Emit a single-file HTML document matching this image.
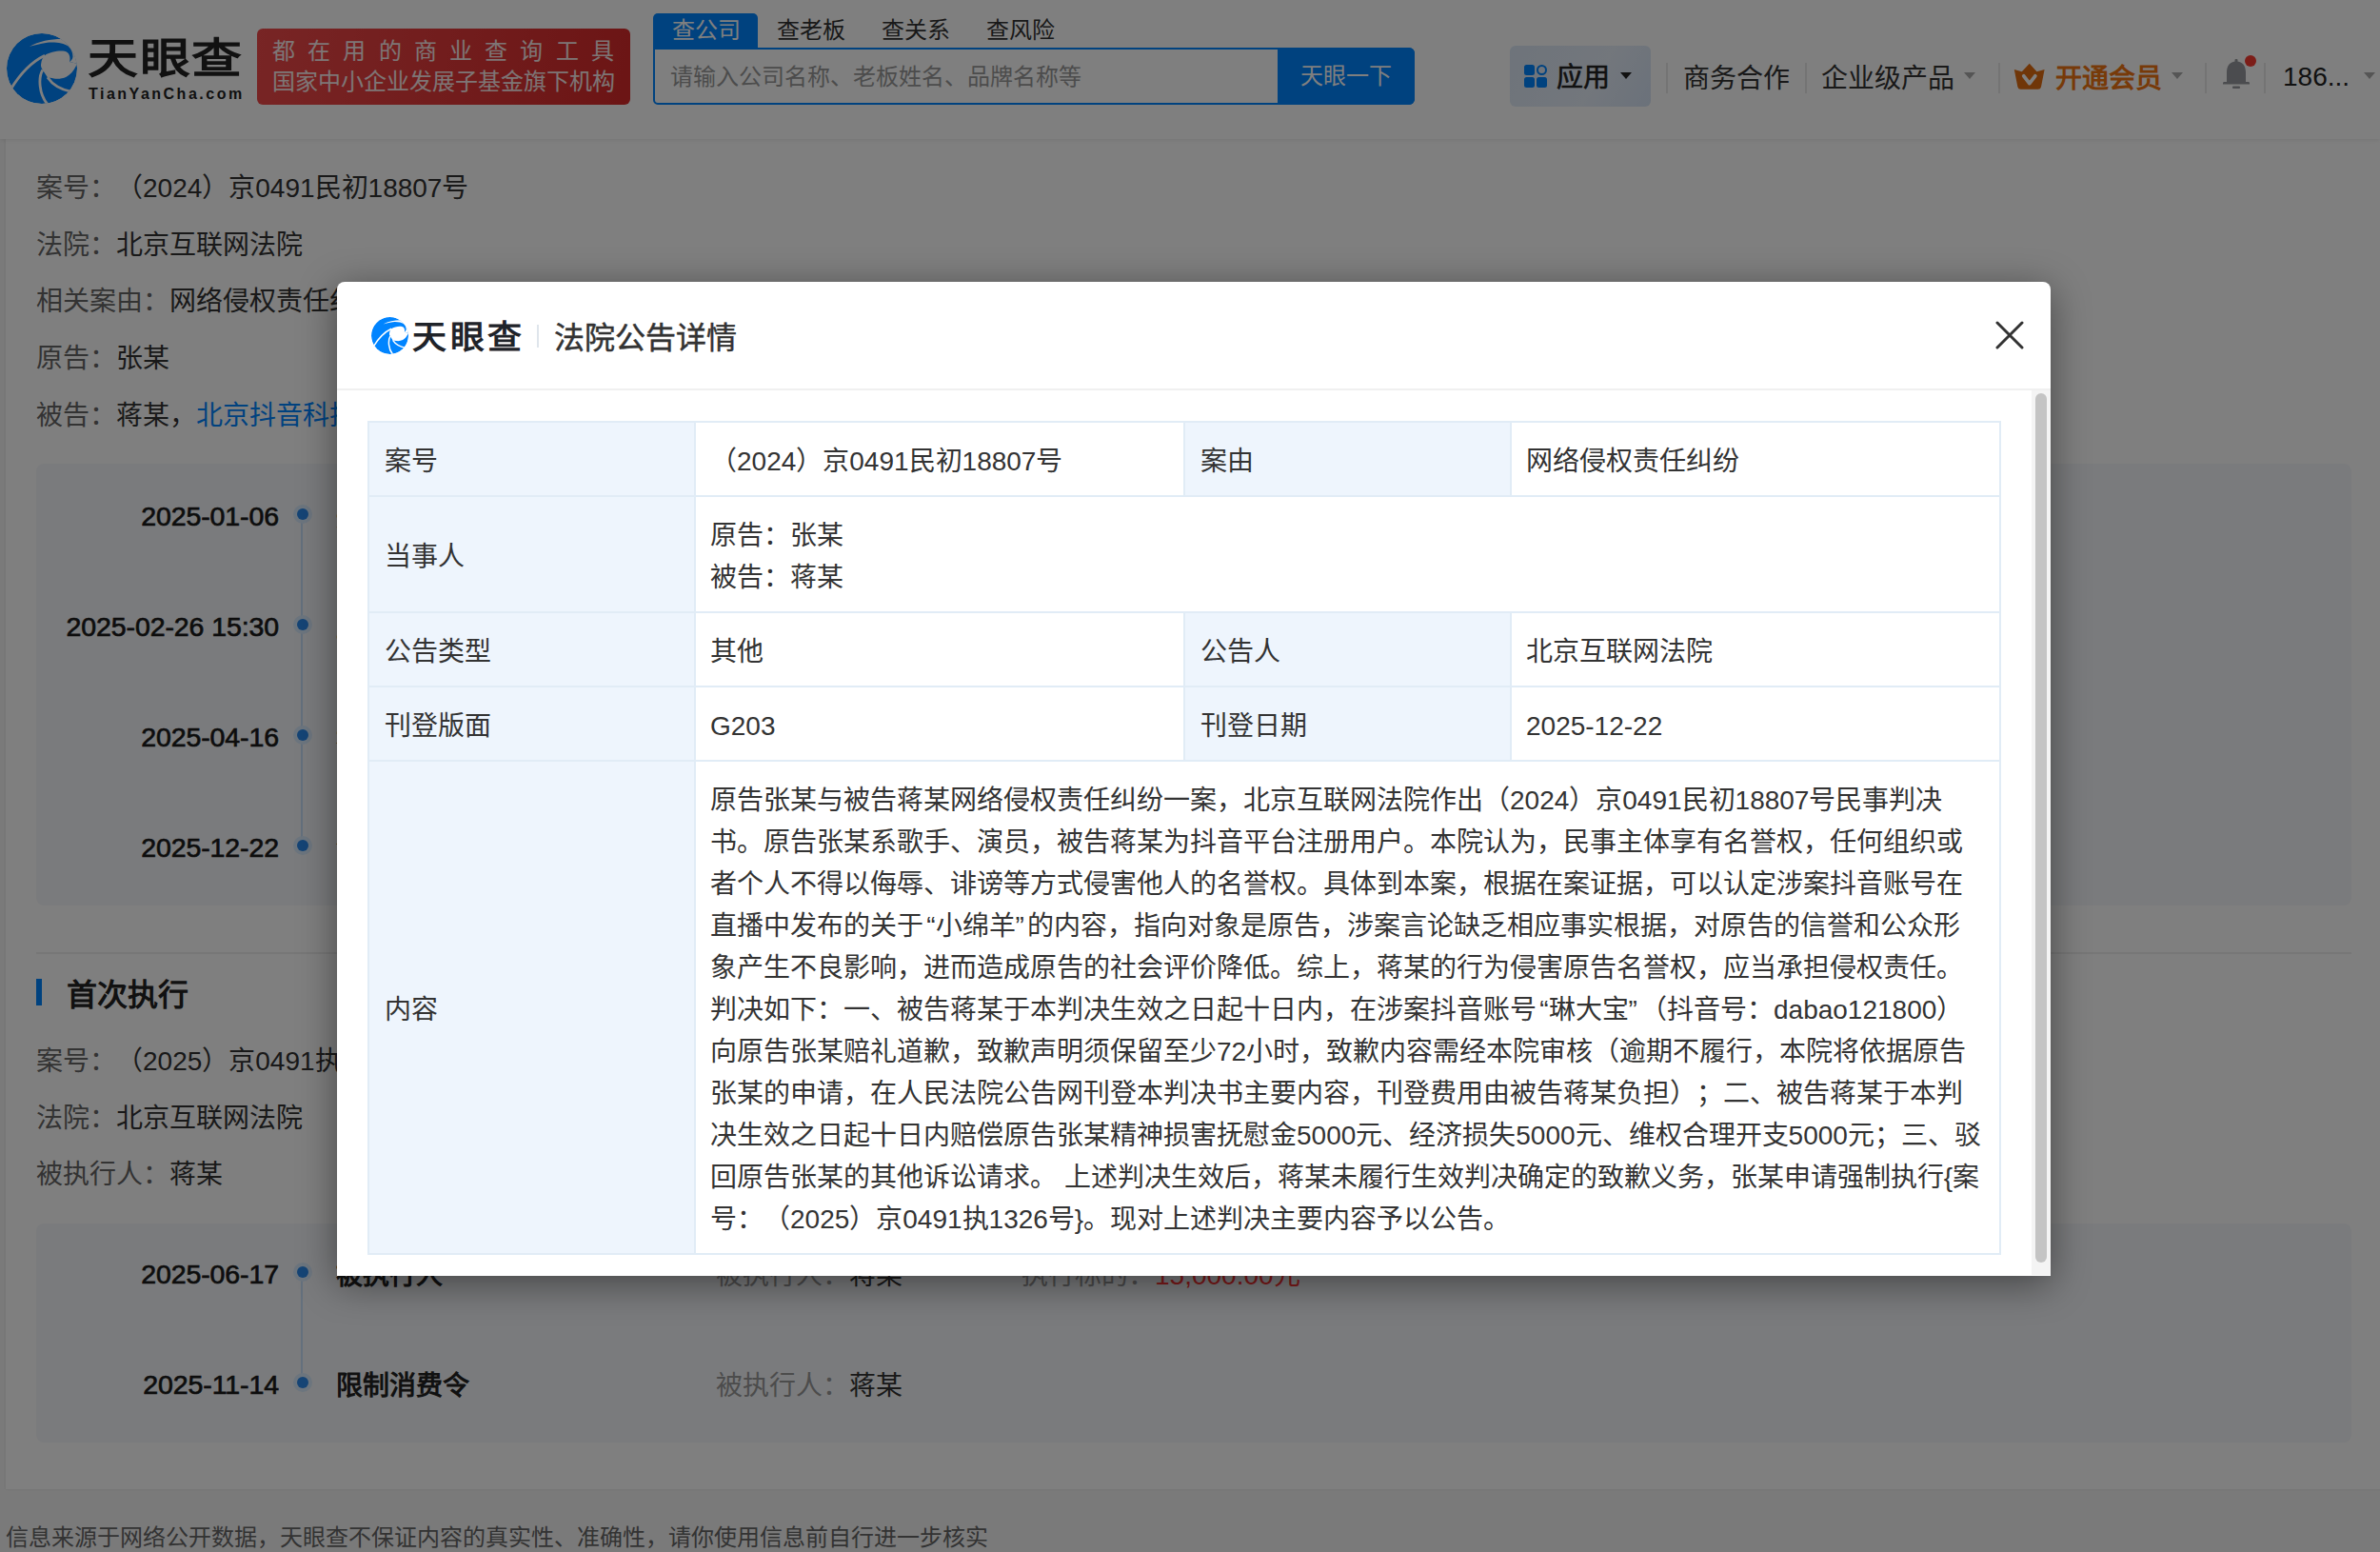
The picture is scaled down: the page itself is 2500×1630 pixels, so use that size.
<!DOCTYPE html>
<html lang="zh-CN">
<head>
<meta charset="utf-8">
<style>
*{box-sizing:border-box;margin:0;padding:0}
html,body{width:2500px;height:1630px;overflow:hidden}
body{position:relative;text-spacing-trim:space-all;background:#f5f5f5;font-family:"Liberation Sans",sans-serif;color:#333}
.a{position:absolute;white-space:nowrap}
/* header */
#hdr{position:absolute;z-index:2;left:0;top:0;width:2500px;height:146px;background:#fff;box-shadow:0 1px 5px rgba(0,0,0,.09)}
#card{position:absolute;left:6px;top:146px;width:2496px;height:1418px;background:#fff;box-shadow:0 0 3px rgba(0,0,0,.1)}
.lbl{color:#666}
.t28{font-size:28px;line-height:40px}
.tl-box{position:absolute;left:38px;width:2432px;background:#f5f7fa;border-radius:8px}
.date{position:absolute;right:2207px;font-size:28.5px;line-height:40px;font-weight:normal;-webkit-text-stroke:0.7px #1a1a1a;letter-spacing:-0.1px;color:#1a1a1a;text-align:right}
.dot{position:absolute;left:307.5px;width:20px;height:20px;margin-top:-0.5px;border-radius:50%;background:#d8eafc}
.dot:after{content:"";position:absolute;left:4px;top:4px;width:12px;height:12px;border-radius:50%;background:#2a88ea}
.vline{position:absolute;left:316px;width:2px;background:#c8e0fa}
#ov{position:absolute;z-index:5;left:0;top:0;width:2500px;height:1630px;background:rgba(0,0,0,.5)}
#modal{position:absolute;z-index:6;left:354px;top:296px;width:1800px;height:1044px;background:#fff;border-radius:8px 8px 0 0;box-shadow:0 8px 40px rgba(0,0,0,.45);overflow:hidden}
#tbl{position:absolute;left:32px;top:146px;width:1716px;border-collapse:collapse;table-layout:fixed;font-size:28px;line-height:44px;color:#333}
#tbl td{border:2px solid #e1ecf6;padding:19px 16px 13px;vertical-align:middle}
.ql,.qr{display:inline-block;width:12.5px}.ql{text-align:right}
#tbl td.k{background:#eef5fd;width:343px;padding-left:16px}
#tbl td.v{width:514px;padding-left:15px}
</style>
</head>
<body>
<div id="hdr">
  <svg class="a" style="left:7px;top:35px" width="74" height="74" viewBox="0 0 100 100">
    <defs><clipPath id="cc1"><circle cx="50" cy="50" r="50"/></clipPath></defs>
    <g clip-path="url(#cc1)">
      <circle cx="50" cy="50" r="50" fill="#0084ff"/>
      <path fill="#fff" d="M54.2,31.3 C62,26 80,23 86,27 C90,30 90.5,36 89.3,40.5 L104,44 L104,46 L99.2,45 C95,54 90,59 84.7,61.8 C79,64.5 72,65 67.2,64.1 C63,63.5 60,63 58,62.6 L51.1,51.9 C48.5,48 48.4,46 48.9,43 C49.5,38 51,34 54.2,31.3 Z"/>
      <path fill="#fff" d="M77.9,8.2 C62,8.3 46,11 32,19 C45,15 58,12.6 64,12.8 C74,13 82,14.5 87,18 C92,22 94,28 93.9,33.6 C93.5,37 91.5,39 89.3,40.5 L104,44 L104,-2 L80,-2 Z"/>
      <path fill="none" stroke="#fff" stroke-width="3.8" d="M54.2,31.3 C36,40 20,56 6,79"/>
      <path fill="none" stroke="#fff" stroke-width="3.8" d="M51.1,51.9 C45,62 45,86 59,102"/>
      <path fill="none" stroke="#fff" stroke-width="3.8" d="M58,62.6 C63,70 72,79 92,83"/>
    </g>
  </svg>
  <div class="a" style="left:92px;top:35px;font-size:53px;line-height:64px;font-weight:900;color:#222;letter-spacing:1.5px;transform:scaleY(.83);transform-origin:0 0">天眼查</div>
  <div class="a" style="left:93px;top:88px;font-size:16px;line-height:22px;font-weight:bold;color:#222;letter-spacing:2.5px">TianYanCha.com</div>
  <div class="a" style="left:270px;top:30px;width:392px;height:80px;border-radius:6px;background:linear-gradient(100deg,#f04a4a,#d82a2a)"></div>
  <div class="a" style="left:286px;top:37px;font-size:24px;line-height:34px;color:#fff;letter-spacing:13.2px;opacity:.9">都在用的商业查询工具</div>
  <div class="a" style="left:286px;top:69px;font-size:24px;line-height:34px;color:#fff;opacity:.9">国家中小企业发展子基金旗下机构</div>
  <!-- tabs -->
  <div class="a" style="left:686px;top:14px;width:110px;height:40px;background:#0084ff;border-radius:5px 5px 0 0"></div>
  <div class="a" style="left:706px;top:16px;font-size:24px;line-height:32px;color:#fff">查公司</div>
  <div class="a" style="left:816px;top:16px;font-size:24px;line-height:32px;color:#333">查老板</div>
  <div class="a" style="left:926px;top:16px;font-size:24px;line-height:32px;color:#333">查关系</div>
  <div class="a" style="left:1036px;top:16px;font-size:24px;line-height:32px;color:#333">查风险</div>
  <div class="a" style="left:686px;top:50px;width:800px;height:60px;border:2px solid #0084ff;border-radius:0 6px 6px 5px;background:#fff"></div>
  <div class="a" style="left:704px;top:64px;font-size:24px;line-height:34px;color:#999">请输入公司名称、老板姓名、品牌名称等</div>
  <div class="a" style="left:1342px;top:50px;width:144px;height:60px;background:#0084ff;border-radius:0 6px 6px 0"></div>
  <div class="a" style="left:1366px;top:63px;font-size:24px;line-height:34px;color:#fff">天眼一下</div>
  <!-- right nav -->
  <div class="a" style="left:1586px;top:48px;width:148px;height:64px;border-radius:6px;background:linear-gradient(120deg,#dde8f6,#e6eef9 60%,#d6e3f5)"></div>
  <div class="a" style="left:1601px;top:68px;width:11px;height:11px;border-radius:2.5px;background:#0084ff"></div>
  <div class="a" style="left:1601px;top:81px;width:11px;height:11px;border-radius:2.5px;background:#0084ff"></div>
  <div class="a" style="left:1614px;top:81px;width:11px;height:11px;border-radius:2.5px;background:#0084ff"></div>
  <div class="a" style="left:1614px;top:68px;width:11px;height:11px;border-radius:50%;border:2.2px solid #0084ff"></div>
  <div class="a" style="left:1635px;top:62px;font-size:28px;line-height:40px;color:#222;-webkit-text-stroke:0.6px #222">应用</div>
  <div class="a" style="left:1702px;top:76px;width:0;height:0;border-left:6px solid transparent;border-right:6px solid transparent;border-top:7px solid #222"></div>
  <div class="a" style="left:1750px;top:66px;width:2px;height:32px;background:#e8e8e8"></div>
  <div class="a" style="left:1768px;top:63px;font-size:28px;line-height:40px;color:#333">商务合作</div>
  <div class="a" style="left:1896px;top:66px;width:2px;height:32px;background:#e8e8e8"></div>
  <div class="a" style="left:1913px;top:63px;font-size:28px;line-height:40px;color:#333">企业级产品</div>
  <div class="a" style="left:2063px;top:76px;width:0;height:0;border-left:6.5px solid transparent;border-right:6.5px solid transparent;border-top:7px solid #aaa"></div>
  <div class="a" style="left:2099px;top:66px;width:2px;height:32px;background:#e8e8e8"></div>
  <svg class="a" style="left:2115px;top:66px" width="33" height="28" viewBox="0 0 33 28">
    <path fill="#e06c10" d="M16.8,0.8 L24.5,9.2 L32.6,7 L29,25.2 Q28.4,27.8 25.8,27.8 L7.6,27.8 Q5,27.8 4.4,25.2 L0.8,7 L8.8,9.2 Z"/>
    <path fill="none" stroke="#fff" stroke-width="3.8" stroke-linecap="round" stroke-linejoin="round" d="M10.8,13.8 L16.8,21.6 L22.8,13.8"/>
  </svg>
  <div class="a" style="left:2159px;top:63px;font-size:28px;line-height:40px;color:#ee7412;font-weight:bold">开通会员</div>
  <div class="a" style="left:2281px;top:76px;width:0;height:0;border-left:6.5px solid transparent;border-right:6.5px solid transparent;border-top:7px solid #aaa"></div>
  <div class="a" style="left:2316px;top:66px;width:2px;height:32px;background:#e8e8e8"></div>
  <svg class="a" style="left:2334px;top:60px" width="30" height="35" viewBox="0 0 30 35">
    <rect x="13.5" y="2" width="3" height="4" rx="1" fill="#96999e"/>
    <path fill="#96999e" d="M15,4.5 C8,4.5 5,9.5 5,16 L5,26 L2,26 Q1,26 1,27.5 L1,28.5 L29,28.5 L29,27.5 Q29,26 28,26 L25,26 L25,16 C25,9.5 22,4.5 15,4.5 Z"/>
    <rect x="11" y="30.5" width="8" height="2.5" rx="1" fill="#96999e"/>
  </svg>
  <div class="a" style="left:2358px;top:58px;width:12px;height:12px;border-radius:50%;background:#f83a30"></div>
  <div class="a" style="left:2378px;top:66px;width:2px;height:32px;background:#e8e8e8"></div>
  <div class="a" style="left:2398px;top:61px;font-size:28px;line-height:40px;color:#222">186...</div>
  <div class="a" style="left:2483px;top:76px;width:0;height:0;border-left:6.5px solid transparent;border-right:6.5px solid transparent;border-top:7px solid #aaa"></div>
</div>
<div id="card">
  <div class="a t28" style="left:32px;top:32px"><span class="lbl">案号：</span>（2024）京0491民初18807号</div>
  <div class="a t28" style="left:32px;top:92px"><span class="lbl">法院：</span>北京互联网法院</div>
  <div class="a t28" style="left:32px;top:151px"><span class="lbl">相关案由：</span>网络侵权责任纠纷</div>
  <div class="a t28" style="left:32px;top:211px"><span class="lbl">原告：</span>张某</div>
  <div class="a t28" style="left:32px;top:271px"><span class="lbl">被告：</span>蒋某，<span style="color:#0084ff">北京抖音科技有限公司</span></div>
  <div class="tl-box" style="left:32px;top:341px;height:464px"></div>
  <div style="position:absolute;left:32px;top:854px;width:2432px;height:2px;background:#eee"></div>
  <div style="position:absolute;left:32px;top:882px;width:6px;height:28px;background:#0084ff"></div>
  <div class="a" style="left:64px;top:877px;font-size:32px;line-height:44px;font-weight:bold;color:#222">首次执行</div>
  <div class="a t28" style="left:32px;top:949px"><span class="lbl">案号：</span>（2025）京0491执1326号</div>
  <div class="a t28" style="left:32px;top:1008.5px"><span class="lbl">法院：</span>北京互联网法院</div>
  <div class="a t28" style="left:32px;top:1068px"><span class="lbl">被执行人：</span>蒋某</div>
  <div class="tl-box" style="left:32px;top:1139px;height:230px"></div>
</div>
<div class="a" style="left:6px;top:1598px;font-size:24px;line-height:34px;color:#666">信息来源于网络公开数据，天眼查不保证内容的真实性、准确性，请你使用信息前自行进一步核实</div>
<!-- timeline 1 -->
<div class="vline" style="top:540px;height:348px"></div>
<div class="dot" style="top:530px"></div><div class="date" style="top:522.0px">2025-01-06</div>
<div class="dot" style="top:646px"></div><div class="date" style="top:638.0px">2025-02-26 15:30</div>
<div class="dot" style="top:762px"></div><div class="date" style="top:754.0px">2025-04-16</div>
<div class="dot" style="top:878px"></div><div class="date" style="top:870.0px">2025-12-22</div>
<div class="a" style="left:353px;top:524px;font-size:28px;line-height:40px;font-weight:bold;color:#222">开庭公告</div>
<div class="a" style="left:353px;top:640px;font-size:28px;line-height:40px;font-weight:bold;color:#222">立案信息</div>
<div class="a" style="left:353px;top:756px;font-size:28px;line-height:40px;font-weight:bold;color:#222">裁判文书</div>
<div class="a" style="left:353px;top:872px;font-size:28px;line-height:40px;font-weight:bold;color:#222">法院公告</div>
<!-- timeline 2 -->
<div class="vline" style="top:1336px;height:116px"></div>
<div class="dot" style="top:1326px"></div><div class="date" style="top:1318.0px">2025-06-17</div>
<div class="dot" style="top:1442px"></div><div class="date" style="top:1434.0px">2025-11-14</div>
<div class="a" style="left:353px;top:1320px;font-size:28px;line-height:40px;font-weight:bold;color:#222">被执行人</div>
<div class="a t28" style="left:752px;top:1320px"><span style="color:#999">被执行人：</span>蒋某</div>
<div class="a t28" style="left:1073px;top:1320px"><span style="color:#999">执行标的：</span><span style="color:#ff3535">15,000.00元</span></div>
<div class="a" style="left:353px;top:1436px;font-size:28px;line-height:40px;font-weight:bold;color:#222">限制消费令</div>
<div class="a t28" style="left:752px;top:1436px"><span style="color:#999">被执行人：</span>蒋某</div>
<div id="ov"></div>
<div id="modal">
  <svg class="a" style="left:36px;top:37px" width="39" height="39" viewBox="0 0 100 100">
    <defs><clipPath id="cc2"><circle cx="50" cy="50" r="50"/></clipPath></defs>
    <g clip-path="url(#cc2)">
      <circle cx="50" cy="50" r="50" fill="#0084ff"/>
      <path fill="#fff" d="M54.2,31.3 C62,26 80,23 86,27 C90,30 90.5,36 89.3,40.5 L104,44 L104,46 L99.2,45 C95,54 90,59 84.7,61.8 C79,64.5 72,65 67.2,64.1 C63,63.5 60,63 58,62.6 L51.1,51.9 C48.5,48 48.4,46 48.9,43 C49.5,38 51,34 54.2,31.3 Z"/>
      <path fill="#fff" d="M77.9,8.2 C62,8.3 46,11 32,19 C45,15 58,12.6 64,12.8 C74,13 82,14.5 87,18 C92,22 94,28 93.9,33.6 C93.5,37 91.5,39 89.3,40.5 L104,44 L104,-2 L80,-2 Z"/>
      <path fill="none" stroke="#fff" stroke-width="3.8" d="M54.2,31.3 C36,40 20,56 6,79"/>
      <path fill="none" stroke="#fff" stroke-width="3.8" d="M51.1,51.9 C45,62 45,86 59,102"/>
      <path fill="none" stroke="#fff" stroke-width="3.8" d="M58,62.6 C63,70 72,79 92,83"/>
    </g>
  </svg>
  <div class="a" style="left:79px;top:38px;font-size:36px;line-height:44px;font-weight:900;color:#1f2329;letter-spacing:3.5px;transform:scaleY(.94);transform-origin:0 0">天眼查</div>
  <div class="a" style="left:210px;top:45px;width:2px;height:24px;background:#dfe5ec"></div>
  <div class="a" style="left:228px;top:37px;font-size:32px;line-height:44px;color:#333;-webkit-text-stroke:0.5px #333">法院公告详情</div>
  <svg class="a" style="left:1742px;top:41px" width="30" height="30" viewBox="0 0 30 30"><path d="M2,2 L28,28 M28,2 L2,28" stroke="#333" stroke-width="3" stroke-linecap="round"/></svg>
  <div class="a" style="left:0;top:112px;width:1800px;height:2px;background:#f0f0f0"></div>
  <div class="a" style="left:1780px;top:114px;width:20px;height:929px;background:#f4f4f4"></div>
  <div class="a" style="left:1784px;top:117px;width:12px;height:913px;border-radius:6px;background:#c4c4c4"></div>
  <table id="tbl">
    <tr style="height:78px"><td class="k">案号</td><td class="v">（2024）京0491民初18807号</td><td class="k">案由</td><td class="v">网络侵权责任纠纷</td></tr>
    <tr style="height:122px"><td class="k">当事人</td><td class="v" colspan="3">原告：张某<br>被告：蒋某</td></tr>
    <tr style="height:78px"><td class="k">公告类型</td><td class="v">其他</td><td class="k">公告人</td><td class="v">北京互联网法院</td></tr>
    <tr style="height:78px"><td class="k">刊登版面</td><td class="v">G203</td><td class="k">刊登日期</td><td class="v">2025-12-22</td></tr>
    <tr><td class="k">内容</td><td class="v" colspan="3" style="white-space:nowrap">原告张某与被告蒋某网络侵权责任纠纷一案，北京互联网法院作出（2024）京0491民初18807号民事判决<br>书。原告张某系歌手、演员，被告蒋某为抖音平台注册用户。本院认为，民事主体享有名誉权，任何组织或<br>者个人不得以侮辱、诽谤等方式侵害他人的名誉权。具体到本案，根据在案证据，可以认定涉案抖音账号在<br>直播中发布的关于<span class="ql">“</span>小绵羊<span class="qr">”</span>的内容，指向对象是原告，涉案言论缺乏相应事实根据，对原告的信誉和公众形<br>象产生不良影响，进而造成原告的社会评价降低。综上，蒋某的行为侵害原告名誉权，应当承担侵权责任。<br>判决如下：一、被告蒋某于本判决生效之日起十日内，在涉案抖音账号<span class="ql">“</span>琳大宝<span class="qr">”</span>（抖音号：dabao121800）<br>向原告张某赔礼道歉，致歉声明须保留至少72小时，致歉内容需经本院审核（逾期不履行，本院将依据原告<br>张某的申请，在人民法院公告网刊登本判决书主要内容，刊登费用由被告蒋某负担）；二、被告蒋某于本判<br>决生效之日起十日内赔偿原告张某精神损害抚慰金5000元、经济损失5000元、维权合理开支5000元；三、驳<br>回原告张某的其他诉讼请求。 上述判决生效后，蒋某未履行生效判决确定的致歉义务，张某申请强制执行{案<br>号：（2025）京0491执1326号}。现对上述判决主要内容予以公告。</td></tr>
  </table>
</div>
</body>
</html>
